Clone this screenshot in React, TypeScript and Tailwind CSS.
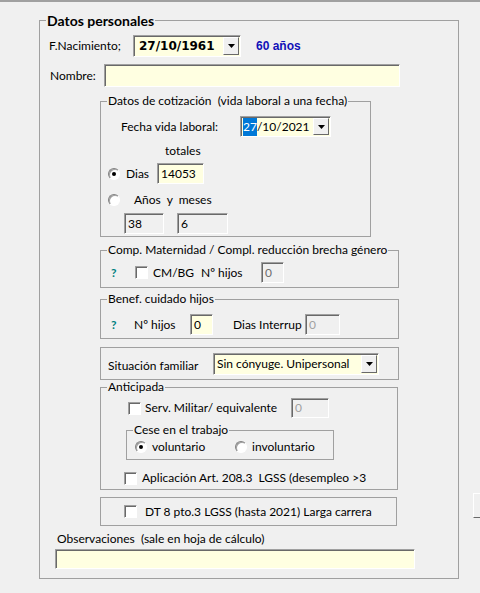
import type { ReactNode } from "react";

const sunken =
  "border border-t-[#a0a0a0] border-l-[#a0a0a0] border-b-white border-r-white shadow-[inset_1px_1px_0_#696969]";

function Box({
  className = "",
  yellow,
  children,
}: {
  className?: string;
  yellow?: boolean;
  children?: ReactNode;
}) {
  return (
    <div
      className={`${sunken} flex items-center pl-[3px] ${yellow ? "bg-[#ffffe1]" : "bg-[#f0f0f0] text-[#6d6d6d]"} ${className}`}
    >
      {children}
    </div>
  );
}

function DropButton() {
  return (
    <div className="ml-auto mr-[1px] flex h-[calc(100%-2px)] w-[16px] items-center justify-center border border-t-white border-l-white border-b-[#696969] border-r-[#696969] bg-[#f0f0f0]">
      <svg width="7" height="4" viewBox="0 0 7 4">
        <path d="M0 0 L7 0 L3.5 4 Z" fill="#000" />
      </svg>
    </div>
  );
}

function Check({ className = "" }: { className?: string }) {
  return <div className={`${sunken} h-[13px] w-[13px] shrink-0 bg-white ${className}`} />;
}

function Radio({ checked, className = "" }: { checked?: boolean; className?: string }) {
  return (
    <div
      className={`flex h-[12px] w-[12px] shrink-0 items-center justify-center rounded-full border border-t-[#808080] border-l-[#808080] border-b-white border-r-white bg-white shadow-[inset_1px_1px_0_#a0a0a0] ${className}`}
    >
      {checked && <div className="h-[4px] w-[4px] rounded-full bg-black" />}
    </div>
  );
}

function Group({
  title,
  className = "",
  children,
}: {
  title: string;
  className?: string;
  children?: ReactNode;
}) {
  return (
    <fieldset className={`border border-[#a0a0a0] ${className}`}>
      <legend className="ml-[6px] px-[1px] leading-[14px]">{title}</legend>
      {children}
    </fieldset>
  );
}

export default function App() {
  return (
    <div className="h-[593px] w-[480px] overflow-hidden bg-[#f0f0f0] font-['Lato',sans-serif] text-[12px] text-black">
      <div className="h-[2px] bg-[#a0a0a0]" />
      <div className="mt-[10px] flex items-start">
        <fieldset className="ml-[39px] h-[567px] w-[420px] shrink-0 border border-[#a0a0a0]">
          <legend className="ml-[6px] px-[1px] text-[14px] font-bold leading-[17px]">Datos personales</legend>

          {/* nacimiento */}
          <div className="mt-[6px] flex h-[22px] items-center">
            <span className="ml-[9px] w-[84px]">F.Nacimiento;</span>
            <Box yellow className="h-[22px] w-[108px]">
              <span className="ml-[2px] font-['DejaVu_Sans',sans-serif] font-bold">27/10/1961</span>
              <DropButton />
            </Box>
            <span className="ml-[15px] font-['Liberation_Sans',sans-serif] font-bold text-[#1010b8]">60 años</span>
          </div>

          <div className="mt-[7px] flex h-[23px] items-center">
            <span className="ml-[10px] w-[54px]">Nombre:</span>
            <Box yellow className="h-[23px] w-[296px]" />
          </div>

          <Group title="Datos de cotización  (vida laboral a una fecha)" className="ml-[60px] mt-[7px] h-[143px] w-[271px] whitespace-pre">
            <div className="mt-[8px] flex h-[21px] items-center">
              <span className="ml-[20px] w-[119px]">Fecha vida laboral:</span>
              <Box yellow className="h-[21px] w-[91px] !pl-[2px]">
                <span className="bg-[#0078d7] text-white">27</span>
                <span>/10/2021</span>
                <DropButton />
              </Box>
            </div>
            <div className="ml-[64px] mt-[7px] leading-[14px]">totales</div>
            <div className="mt-[5px] flex h-[21px] items-center">
              <Radio checked className="ml-[7px]" />
              <span className="ml-[6px] w-[31px]">Dias</span>
              <Box yellow className="h-[21px] w-[47px]">14053</Box>
            </div>
            <div className="mt-[9px] flex h-[14px] items-center">
              <Radio className="ml-[7px]" />
              <span className="ml-[14px]">Años  y  meses</span>
            </div>
            <div className="mt-[6px] flex h-[21px] items-center">
              <Box className="ml-[23px] h-[21px] w-[40px] !text-black">38</Box>
              <Box className="ml-[13px] h-[21px] w-[51px] !text-black">6</Box>
            </div>
          </Group>

          <Group title="Comp. Maternidad / Compl. reducción brecha género" className="ml-[60px] mt-[6px] h-[45px] w-[299px]">
            <div className="mt-[5px] flex h-[21px] items-center">
              <span className="ml-[10px] w-[24px] font-bold text-[#008080]">?</span>
              <Check />
              <span className="ml-[5px] w-[48px]">CM/BG</span>
              <span className="w-[60px]">Nº hijos</span>
              <Box className="h-[21px] w-[23px]">0</Box>
            </div>
          </Group>

          <Group title="Benef. cuidado hijos" className="ml-[60px] mt-[4px] h-[47px] w-[299px]">
            <div className="mt-[8px] flex h-[21px] items-center">
              <span className="ml-[10px] w-[23px] font-bold text-[#008080]">?</span>
              <span className="w-[56px]">Nº hijos</span>
              <Box yellow className="h-[21px] w-[23px]">0</Box>
              <span className="ml-[20px] w-[72px]">Dias Interrup</span>
              <Box className="h-[21px] w-[35px] text-[#a0a0a0]">0</Box>
            </div>
          </Group>

          <div className="ml-[60px] mt-[8px] h-[33px] w-[299px] border border-[#a0a0a0] pt-[5px]">
            <div className="flex h-[22px] items-center">
              <span className="ml-[7px] w-[105px] pt-[4px]">Situación familiar</span>
              <Box yellow className="h-[22px] w-[166px] !items-start">
                <span className="pt-[1px]">Sin cónyuge. Unipersonal</span>
                <div className="ml-auto flex h-full items-center">
                  <DropButton />
                </div>
              </Box>
            </div>
          </div>

          <Group title="Anticipada" className="ml-[60px] h-[110px] w-[298px]">
            <div className="mt-[4px] flex h-[20px] items-center">
              <Check className="ml-[27px]" />
              <span className="ml-[4px] w-[146px]">Serv. Militar/ equivalente</span>
              <Box className="h-[20px] w-[38px] text-[#a0a0a0]">0</Box>
            </div>
            <Group title="Cese en el trabajo" className="ml-[25px] mt-[5px] h-[37px] w-[208px]">
              <div className="mt-[3px] flex h-[14px] items-center">
                <Radio checked className="ml-[8px]" />
                <span className="ml-[5px] w-[83px]">voluntario</span>
                <Radio />
                <span className="ml-[5px]">involuntario</span>
              </div>
            </Group>
            <div className="mt-[11px] flex h-[14px] items-center">
              <Check className="ml-[23px]" />
              <span className="ml-[5px] whitespace-pre">Aplicación Art. 208.3  LGSS (desempleo &gt;3</span>
            </div>
          </Group>

          <div className="ml-[60px] mt-[7px] flex h-[29px] w-[297px] items-center border border-[#a0a0a0]">
            <Check className="ml-[23px]" />
            <span className="ml-[8px]">DT 8 pto.3 LGSS (hasta 2021) Larga carrera</span>
          </div>

          <div className="ml-[17px] mt-[6px] whitespace-pre leading-[14px]">Observaciones  (sale en hoja de cálculo)</div>
          <Box yellow className="ml-[15px] mt-[3px] h-[20px] w-[360px]" />
        </fieldset>

        <div className="ml-[14px] mt-[481px] h-[25px] w-[60px] shrink-0 border border-t-white border-l-white border-b-[#696969] border-r-[#696969] bg-[#f0f0f0]" />
      </div>
    </div>
  );
}
